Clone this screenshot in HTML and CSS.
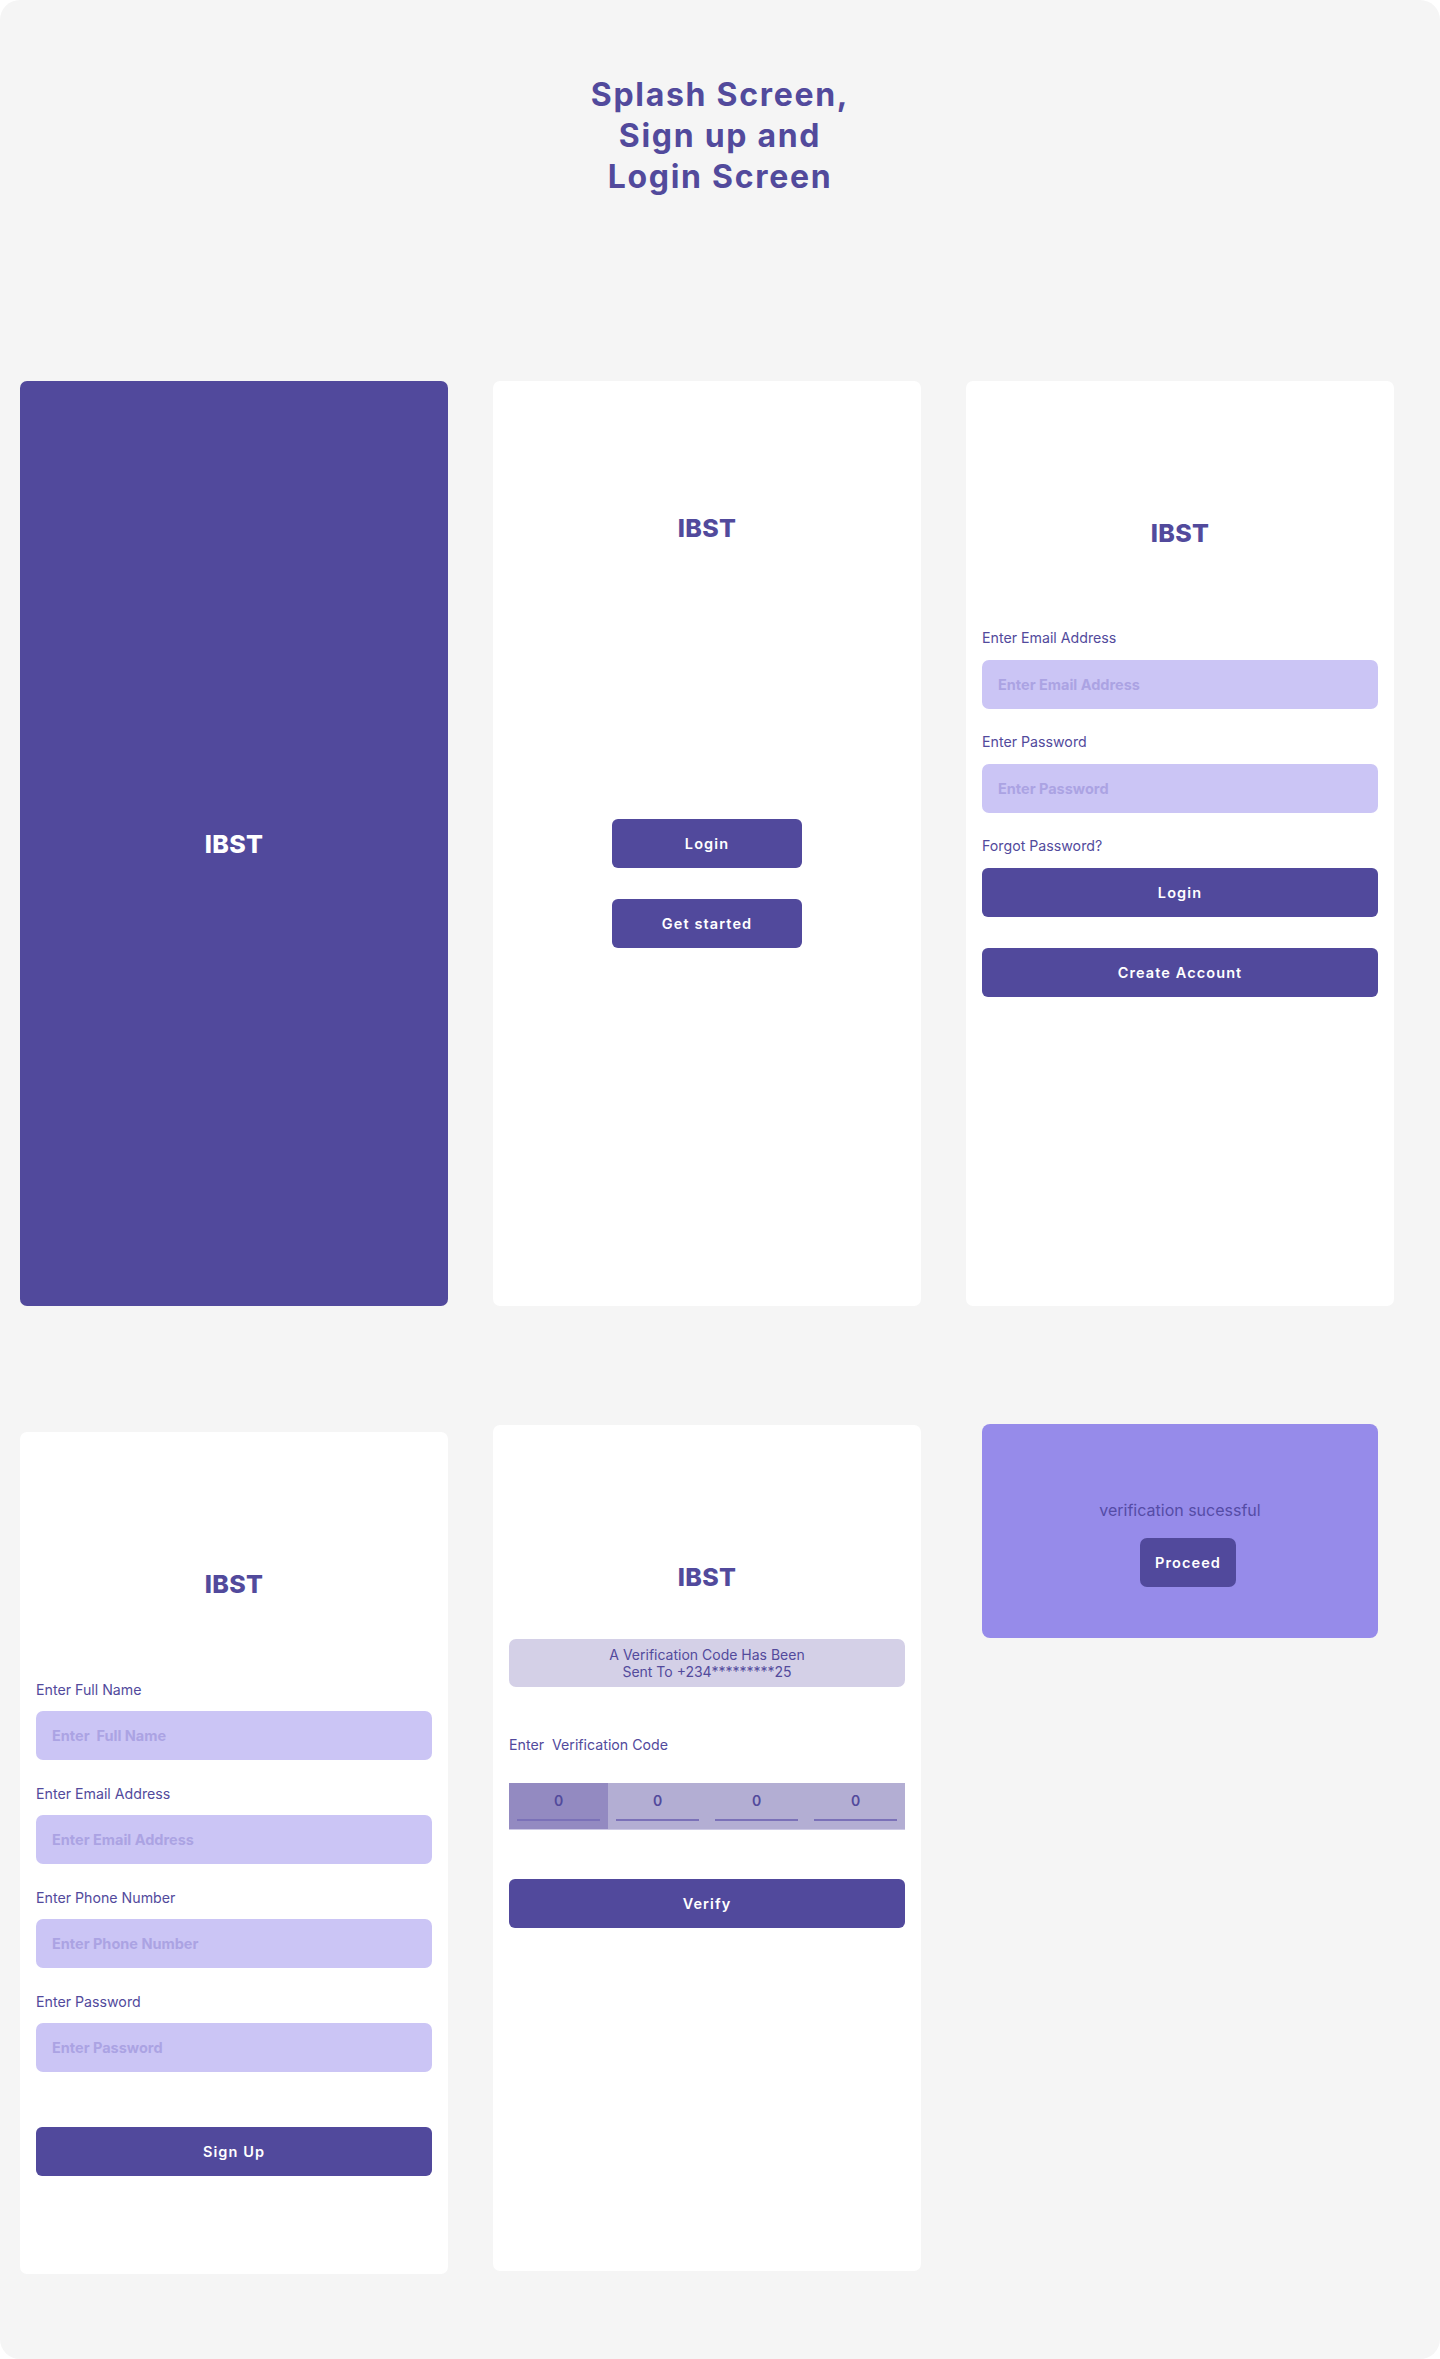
FILE: index.html
```html
<!DOCTYPE html>
<html lang="en">
<head>
<meta charset="utf-8">
<title>Splash Screen, Sign up and Login Screen</title>
<link rel="stylesheet" href="styles.css">
</head>
<body>
<div class="frame">
  <h1 class="title">Splash Screen,<br>Sign up and<br>Login Screen</h1>

  <div class="row row-one">
    <section class="card card-splash">
      <div class="logo logo-light">IBST</div>
    </section>

    <section class="card card-welcome">
      <div class="logo">IBST</div>
      <div class="welcome-actions">
        <button class="btn btn-small">Login</button>
        <button class="btn btn-small">Get started</button>
      </div>
    </section>

    <section class="card card-login">
      <div class="logo">IBST</div>
      <form class="form form-login">
        <label class="label">Enter Email Address</label>
        <input class="field" type="text" placeholder="Enter Email Address">
        <label class="label">Enter Password</label>
        <input class="field" type="password" placeholder="Enter Password">
        <div class="label forgot">Forgot Password?</div>
        <button type="button" class="btn btn-wide btn-login">Login</button>
        <button type="button" class="btn btn-wide btn-create">Create Account</button>
      </form>
    </section>
  </div>

  <div class="row row-two">
    <section class="card card-signup">
      <div class="logo">IBST</div>
      <form class="form form-signup">
        <label class="label">Enter Full Name</label>
        <input class="field signup-field" type="text" placeholder="Enter  Full Name">
        <label class="label">Enter Email Address</label>
        <input class="field signup-field" type="text" placeholder="Enter Email Address">
        <label class="label">Enter Phone Number</label>
        <input class="field signup-field" type="text" placeholder="Enter Phone Number">
        <label class="label">Enter Password</label>
        <input class="field signup-field" type="password" placeholder="Enter Password">
        <button type="button" class="btn btn-wide btn-signup">Sign Up</button>
      </form>
    </section>

    <section class="card card-verify">
      <div class="logo">IBST</div>
      <div class="inner">
        <div class="notice">A Verification Code Has Been<br>Sent To +234*********25</div>
        <div class="label code-label">Enter&nbsp; Verification Code</div>
        <div class="otp">
          <div class="otp-cell active"><span class="digit">0</span><span class="line"></span></div>
          <div class="otp-cell"><span class="digit">0</span><span class="line"></span></div>
          <div class="otp-cell"><span class="digit">0</span><span class="line"></span></div>
          <div class="otp-cell"><span class="digit">0</span><span class="line"></span></div>
        </div>
        <button type="button" class="btn btn-wide btn-verify">Verify</button>
      </div>
    </section>

    <div class="popup-col">
      <section class="popup">
        <p class="popup-text">verification sucessful</p>
        <button type="button" class="btn btn-proceed">Proceed</button>
      </section>
    </div>
  </div>
</div>
</body>
</html>
```

FILE: styles.css
```css
* { box-sizing: border-box; }

html, body {
  margin: 0;
  padding: 0;
  background: #ffffff;
}

body {
  font-family: Inter, "Noto Sans", sans-serif;
  color: #524a9c;
}

.frame {
  width: 1440px;
  height: 2359px;
  background: #f5f5f5;
  border-radius: 20px;
  padding-top: 74px;
  overflow: hidden;
}

.title {
  margin: 0;
  font-size: 32px;
  line-height: 41px;
  font-weight: 700;
  letter-spacing: 1.7px;
  text-align: center;
  color: #524a9c;
}

.row {
  display: grid;
  grid-template-columns: 428px 428px 428px;
  column-gap: 45px;
  padding-left: 20px;
  align-items: start;
}

.row-one { margin-top: 184px; }
.row-two { margin-top: 118px; }

.card {
  background: #ffffff;
  border-radius: 7px;
  display: flex;
  flex-direction: column;
}

.row-one .card { height: 925px; }

.logo {
  font-size: 25px;
  line-height: 30px;
  font-weight: 800;
  text-align: center;
  color: #524a9c;
  letter-spacing: 0.3px;
}

.logo-light { color: #ffffff; }

.card-splash {
  background: #51499c;
  justify-content: center;
}

.card-welcome { padding-top: 132px; }

.welcome-actions {
  display: flex;
  flex-direction: column;
  align-items: center;
  gap: 31px;
  margin-top: 276px;
}

.btn {
  border: 0;
  background: #51499c;
  color: #ffffff;
  font-family: Inter, "Noto Sans", sans-serif;
  font-size: 14.5px;
  font-weight: 600;
  letter-spacing: 1.1px;
  border-radius: 6px;
  cursor: pointer;
  padding: 0;
}

.btn-small {
  width: 190px;
  height: 49px;
}

.card-login { padding-top: 137px; }

.form {
  display: flex;
  flex-direction: column;
  padding: 0 16px;
}

.form-login { margin-top: 82px; }

.label {
  display: block;
  font-size: 14.2px;
  line-height: 16px;
  font-weight: 400;
  color: #524a9c;
}

.field {
  width: 396px;
  height: 49px;
  border: 0;
  border-radius: 7px;
  background: #cbc5f5;
  padding: 0 16px;
  font-family: Inter, "Noto Sans", sans-serif;
  font-size: 14.5px;
  font-weight: 700;
  color: #524a9c;
  outline: none;
  margin: 14px 0 25px;
}

.field::placeholder {
  color: #aba3e3;
  opacity: 1;
}

.forgot { margin-bottom: 14px; }

.btn-wide {
  width: 396px;
  height: 49px;
}

.btn-create { margin-top: 31px; }

.card-signup {
  margin-top: 8px;
  height: 842px;
  padding-top: 137px;
}

.form-signup { margin-top: 83px; }

.signup-field { margin: 13px 0 26px; }

.btn-signup { margin-top: 29px; }

.card-verify {
  margin-top: 1px;
  height: 846px;
  padding-top: 137px;
}

.inner {
  padding: 0 16px;
  display: flex;
  flex-direction: column;
}

.notice {
  margin-top: 47px;
  height: 48px;
  border-radius: 7px;
  background: #d4d0e7;
  font-size: 14px;
  line-height: 17px;
  text-align: center;
  display: flex;
  align-items: center;
  justify-content: center;
  color: #524a9c;
}

.code-label { margin-top: 50px; }

.otp {
  margin-top: 30px;
  display: grid;
  grid-template-columns: repeat(4, 1fr);
  height: 47px;
  background: #b3aed3;
  border-bottom: 1px solid #cdc9e4;
}

.otp-cell {
  display: flex;
  flex-direction: column;
  align-items: stretch;
  padding: 10px 8px 0;
}

.otp-cell.active { background: #938ac1; }

.digit {
  font-size: 14px;
  line-height: 16px;
  font-weight: 600;
  text-align: center;
  color: #524a9c;
}

.line {
  display: block;
  height: 2px;
  margin-top: 10px;
  background: #7b71b8;
}

.btn-verify { margin-top: 49px; }

.popup-col { padding: 0 16px; }

.popup {
  height: 214px;
  border-radius: 8px;
  background: #968bea;
  display: flex;
  flex-direction: column;
  align-items: center;
  padding-top: 77px;
}

.popup-text {
  margin: 0;
  font-size: 16px;
  line-height: 18px;
  color: #554ca6;
}

.btn-proceed {
  margin-top: 19px;
  margin-left: 16px;
  width: 96px;
  height: 49px;
  border-radius: 7px;
}
```
